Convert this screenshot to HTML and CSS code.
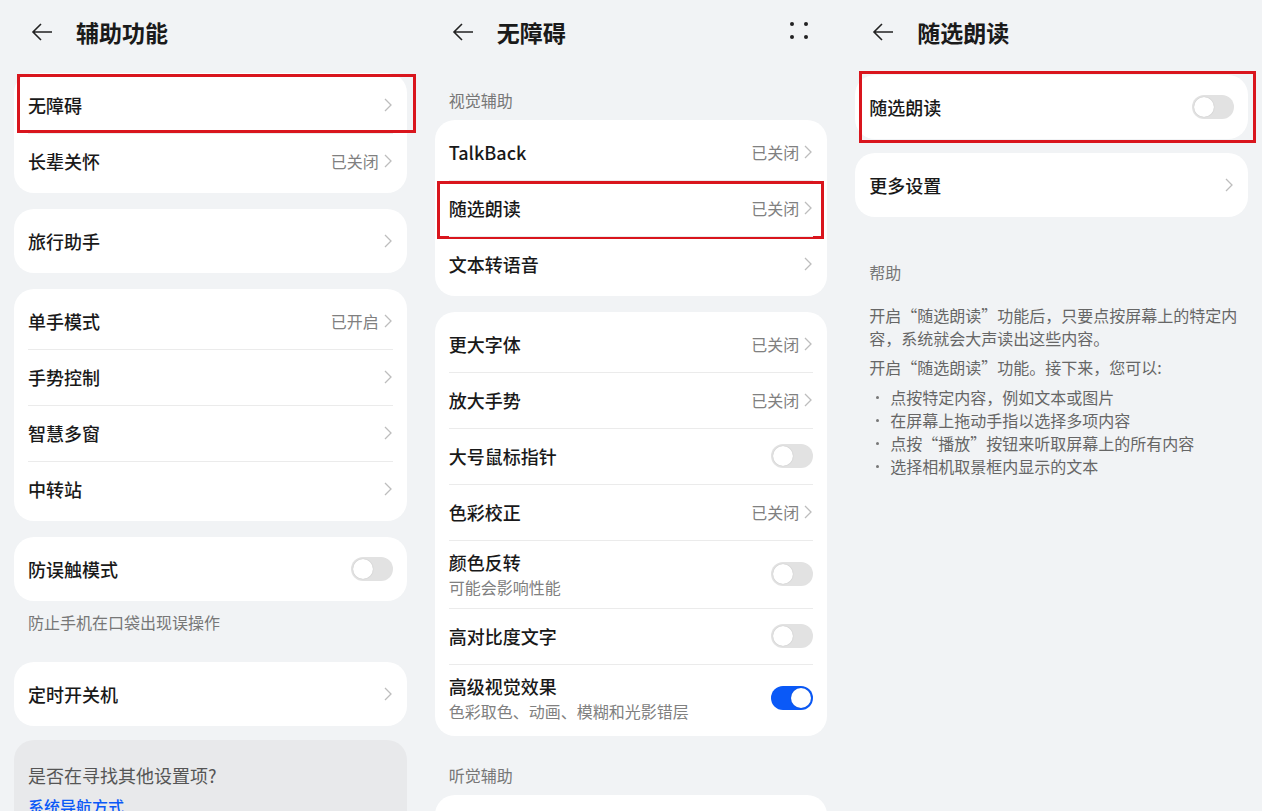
FILE: index.html
```html
<!DOCTYPE html>
<html lang="zh-CN">
<head>
  <meta charset="UTF-8">
  <meta name="viewport" content="width=device-width, initial-scale=1.0">
  <title>辅助功能</title>
  <link rel="stylesheet" href="styles.css">
</head>
<body>
  <div class="screens">

    <!-- screen 1 -->
    <section class="pane">
      <header class="bar">
        <svg class="back" viewBox="0 0 24 24"><path d="M22 12H3M11 4l-8 8 8 8"/></svg>
        <h1>辅助功能</h1>
      </header>

      <div class="card first">
        <div class="row">
          <span class="label">无障碍</span>
          <svg class="chev" viewBox="0 0 12 24"><path d="M4 6l6 6-6 6"/></svg>
          <span class="mark mark--a"></span>
        </div>
        <div class="row">
          <span class="label">长辈关怀</span>
          <span class="value">已关闭</span>
          <svg class="chev" viewBox="0 0 12 24"><path d="M4 6l6 6-6 6"/></svg>
        </div>
      </div>

      <div class="card">
        <div class="row">
          <span class="label">旅行助手</span>
          <svg class="chev" viewBox="0 0 12 24"><path d="M4 6l6 6-6 6"/></svg>
        </div>
      </div>

      <div class="card">
        <div class="row">
          <span class="label">单手模式</span>
          <span class="value">已开启</span>
          <svg class="chev" viewBox="0 0 12 24"><path d="M4 6l6 6-6 6"/></svg>
        </div>
        <div class="row">
          <span class="label">手势控制</span>
          <svg class="chev" viewBox="0 0 12 24"><path d="M4 6l6 6-6 6"/></svg>
        </div>
        <div class="row">
          <span class="label">智慧多窗</span>
          <svg class="chev" viewBox="0 0 12 24"><path d="M4 6l6 6-6 6"/></svg>
        </div>
        <div class="row">
          <span class="label">中转站</span>
          <svg class="chev" viewBox="0 0 12 24"><path d="M4 6l6 6-6 6"/></svg>
        </div>
      </div>

      <div class="card">
        <div class="row">
          <span class="label">防误触模式</span>
          <span class="switch"></span>
        </div>
      </div>
      <p class="note">防止手机在口袋出现误操作</p>

      <div class="card card--flush">
        <div class="row">
          <span class="label">定时开关机</span>
          <svg class="chev" viewBox="0 0 12 24"><path d="M4 6l6 6-6 6"/></svg>
        </div>
      </div>

      <div class="suggest">
        <p class="suggest__title">是否在寻找其他设置项?</p>
        <a href="javascript:void(0);" class="suggest__link">系统导航方式</a>
      </div>
    </section>

    <!-- screen 2 -->
    <section class="pane">
      <header class="bar">
        <svg class="back" viewBox="0 0 24 24"><path d="M22 12H3M11 4l-8 8 8 8"/></svg>
        <h1>无障碍</h1>
        <svg class="more" viewBox="0 0 24 24">
          <circle cx="5" cy="4" r="2"/><circle cx="19" cy="4" r="2"/>
          <circle cx="5" cy="17" r="2"/><circle cx="19" cy="17" r="2"/>
        </svg>
      </header>

      <h2 class="group">视觉辅助</h2>
      <div class="card card--group">
        <div class="row">
          <span class="label">TalkBack</span>
          <span class="value">已关闭</span>
          <svg class="chev" viewBox="0 0 12 24"><path d="M4 6l6 6-6 6"/></svg>
        </div>
        <div class="row">
          <span class="label">随选朗读</span>
          <span class="value">已关闭</span>
          <svg class="chev" viewBox="0 0 12 24"><path d="M4 6l6 6-6 6"/></svg>
          <span class="mark mark--b"></span>
        </div>
        <div class="row">
          <span class="label">文本转语音</span>
          <svg class="chev" viewBox="0 0 12 24"><path d="M4 6l6 6-6 6"/></svg>
        </div>
      </div>

      <div class="card">
        <div class="row">
          <span class="label">更大字体</span>
          <span class="value">已关闭</span>
          <svg class="chev" viewBox="0 0 12 24"><path d="M4 6l6 6-6 6"/></svg>
        </div>
        <div class="row">
          <span class="label">放大手势</span>
          <span class="value">已关闭</span>
          <svg class="chev" viewBox="0 0 12 24"><path d="M4 6l6 6-6 6"/></svg>
        </div>
        <div class="row">
          <span class="label">大号鼠标指针</span>
          <span class="switch"></span>
        </div>
        <div class="row">
          <span class="label">色彩校正</span>
          <span class="value">已关闭</span>
          <svg class="chev" viewBox="0 0 12 24"><path d="M4 6l6 6-6 6"/></svg>
        </div>
        <div class="row row--tall">
          <div class="label">
            颜色反转
            <span class="sub">可能会影响性能</span>
          </div>
          <span class="switch"></span>
        </div>
        <div class="row">
          <span class="label">高对比度文字</span>
          <span class="switch"></span>
        </div>
        <div class="row row--tall">
          <div class="label">
            高级视觉效果
            <span class="sub">色彩取色、动画、模糊和光影错层</span>
          </div>
          <span class="switch on"></span>
        </div>
      </div>

      <h2 class="group group--next">听觉辅助</h2>
      <div class="card card--group">
        <div class="row"></div>
      </div>
    </section>

    <!-- screen 3 -->
    <section class="pane">
      <header class="bar">
        <svg class="back" viewBox="0 0 24 24"><path d="M22 12H3M11 4l-8 8 8 8"/></svg>
        <h1>随选朗读</h1>
      </header>

      <div class="card first3">
        <div class="row">
          <span class="label">随选朗读</span>
          <span class="switch"></span>
          <span class="mark mark--c"></span>
        </div>
      </div>
      <div class="card card--tight">
        <div class="row">
          <span class="label">更多设置</span>
          <svg class="chev" viewBox="0 0 12 24"><path d="M4 6l6 6-6 6"/></svg>
        </div>
      </div>

      <div class="help">
        <h2 class="help__title">帮助</h2>
        <p>开启“随选朗读”功能后，只要点按屏幕上的特定内容，系统就会大声读出这些内容。</p>
        <p>开启“随选朗读”功能。接下来，您可以:</p>
        <ul>
          <li>点按特定内容，例如文本或图片</li>
          <li>在屏幕上拖动手指以选择多项内容</li>
          <li>点按“播放”按钮来听取屏幕上的所有内容</li>
          <li>选择相机取景框内显示的文本</li>
        </ul>
      </div>
    </section>

  </div>
</body>
</html>
```

FILE: styles.css
```css
/* reset */
* {
  margin: 0;
  padding: 0;
  box-sizing: border-box;
}
a {
  text-decoration: none;
}
ul {
  list-style: none;
}
body {
  width: 1262px;
  height: 811px;
  overflow: hidden;
  background-color: #f1f3f5;
  font-family: "Noto Sans CJK SC", "Noto Sans", sans-serif;
  color: #191919;
}

/* layout */
.screens {
  display: grid;
  grid-template-columns: repeat(3, 1fr);
  height: 811px;
}
.pane {
  padding: 0 14px;
  overflow: hidden;
}

/* title bar */
.bar {
  display: flex;
  align-items: center;
  height: 64px;
  padding: 0 16px;
}
.bar .back {
  width: 24px;
  height: 24px;
  fill: none;
  stroke: #222;
  stroke-width: 1.6;
  margin-right: 22px;
}
.bar h1 {
  flex: 1;
  font-size: 23px;
  font-weight: 700;
  line-height: 30px;
  color: #1a1a1a;
}
.bar .more {
  width: 24px;
  height: 24px;
  fill: #222;
}

/* cards */
.card {
  background-color: #fff;
  border-radius: 20px;
  padding: 4px 0;
  margin-top: 16px;
}
.card.first {
  margin-top: 9px;
}
.card.first3 {
  margin-top: 11px;
}
.card--tight {
  margin-top: 14px;
}
.card--flush,
.card--group {
  margin-top: 0;
}
.row {
  position: relative;
  display: flex;
  align-items: center;
  height: 56px;
  padding: 0 14px;
}
.row + .row::before {
  content: '';
  position: absolute;
  top: 0;
  left: 14px;
  right: 14px;
  height: 1px;
  background-color: #ebebeb;
}
.row--tall {
  height: 68px;
}
.label {
  flex: 1;
  font-size: 18px;
  font-weight: 500;
  line-height: 24px;
}
.label .sub {
  display: block;
  margin-top: 2px;
  font-size: 16px;
  font-weight: 400;
  line-height: 22px;
  color: #808080;
}
.value {
  font-size: 16px;
  color: #808080;
  margin-right: 2px;
}
.chev {
  width: 12px;
  height: 24px;
  fill: none;
  stroke: #bdbdbd;
  stroke-width: 1.3;
}

/* switch */
.switch {
  display: flex;
  align-items: center;
  width: 42px;
  height: 24px;
  padding: 0 2px;
  border-radius: 12px;
  background-color: #e2e2e2;
}
.switch::after {
  content: '';
  width: 20px;
  height: 20px;
  border-radius: 50%;
  background-color: #fff;
  box-shadow: 0 0 1px rgba(0, 0, 0, 0.25);
}
.switch.on {
  justify-content: flex-end;
  background-color: #0a59f7;
}

/* red highlight boxes */
.mark {
  position: absolute;
  border: 3px solid #d9151d;
}
.mark--a {
  top: -3px;
  left: 3px;
  right: -9px;
  bottom: 0;
}
.mark--b {
  top: 1px;
  left: 2px;
  right: 3px;
  bottom: -3px;
}
.mark--c {
  top: -8px;
  left: 4px;
  right: -8px;
  bottom: -8px;
}

/* texts */
.note {
  padding: 11px 14px 30px;
  font-size: 16px;
  line-height: 20px;
  color: #777;
}
.group {
  padding: 24px 14px 8px;
  font-size: 16px;
  font-weight: 400;
  line-height: 24px;
  color: #777;
}
.group--next {
  padding-top: 27px;
}

/* suggest box */
.suggest {
  margin-top: 14px;
  padding: 23px 14px 20px;
  border-radius: 20px;
  background-color: #e8e9eb;
}
.suggest__title {
  font-size: 18px;
  line-height: 24px;
  color: #555;
}
.suggest__link {
  display: block;
  margin-top: 7px;
  font-size: 16px;
  font-weight: 500;
  line-height: 24px;
  color: #0a59f7;
}

/* help */
.help {
  padding: 43px 6px 0 14px;
  font-size: 16px;
  line-height: 23px;
  color: #666;
}
.help__title {
  font-size: 16px;
  font-weight: 400;
  line-height: 24px;
  color: #777;
  margin-bottom: 20px;
}
.help p + p {
  margin-top: 6px;
}
.help ul {
  margin-top: 7px;
}
.help li {
  display: flex;
  align-items: center;
}
.help li::before {
  content: '';
  flex: none;
  width: 3px;
  height: 3px;
  margin: 0 11px 0 7px;
  border-radius: 50%;
  background-color: #777;
}
```
